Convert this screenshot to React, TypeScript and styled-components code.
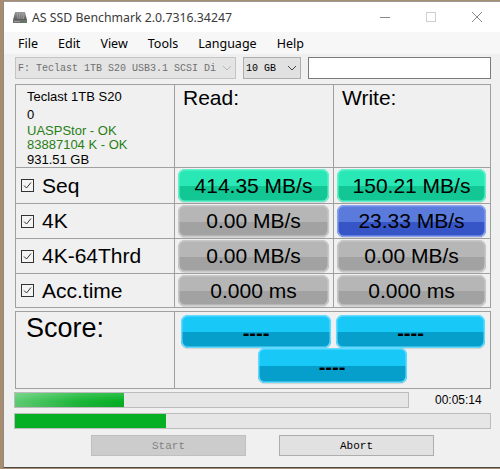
import React from "react";
import styled, { createGlobalStyle } from "styled-components";

const Global = createGlobalStyle`
  html, body { margin: 0; padding: 0; overflow: hidden; }
  body { width: 500px; height: 469px; background: #a98c6d; }
  * { box-sizing: border-box; }
`;

const Window = styled.div`
  margin: 1px 0 0 3px;
  width: 497px;
  height: 467px;
  background: #f0f0f0;
  border-left: 1px solid #8a8a8a;
  border-top: 1px solid #9a9a9a;
  border-bottom: 1px solid #4a4a4a;
  display: flex;
  flex-direction: column;
  font-family: "Liberation Sans", Arial, sans-serif;
  overflow: hidden;
`;

const TitleBar = styled.div`
  height: 30px;
  background: #ffffff;
  display: flex;
  align-items: center;
  padding-left: 8px;
`;

const TitleText = styled.span`
  font-family: "Noto Sans", "Open Sans", sans-serif;
  font-size: 12.3px;
  color: #3a3a3a;
  margin-left: 4px;
`;

const Caption = styled.div`
  margin-left: auto;
  display: flex;
  height: 100%;
`;

const CaptionBtn = styled.div`
  width: 46px;
  height: 100%;
  display: flex;
  align-items: center;
  justify-content: center;
`;

const MenuBar = styled.div`
  height: 22px;
  background: #f7f7f7;
  display: flex;
  align-items: center;
  gap: 20px;
  padding-left: 14px;
  font-family: "Noto Sans", "Open Sans", sans-serif;
  font-size: 12.5px;
  color: #000;
`;

const MenuItem = styled.span``;

const Toolbar = styled.div`
  margin-top: 3px;
  height: 22px;
  padding-left: 11px;
  display: flex;
  gap: 7px;
`;

const Combo = styled.div<{ $w: number; $disabled?: boolean }>`
  width: ${(p) => p.$w}px;
  height: 22px;
  border: 1px solid ${(p) => (p.$disabled ? "#c4c4c4" : "#adadad")};
  background: ${(p) => (p.$disabled ? "#e4e4e4" : "#e1e1e1")};
  color: ${(p) => (p.$disabled ? "#707070" : "#000")};
  display: flex;
  align-items: center;
  padding-left: 2px;
  font-family: "Liberation Mono", "Courier New", monospace;
  font-size: 10px;
  white-space: nowrap;
  overflow: hidden;
`;

const ComboText = styled.span`
  flex: 1;
  overflow: hidden;
`;

const Chevron = styled.span`
  width: 17px;
  display: flex;
  justify-content: center;
  align-items: center;
`;

const TextInput = styled.div`
  width: 183px;
  height: 22px;
  background: #fff;
  border: 1px solid #7a7a7a;
`;

const Grid = styled.div`
  margin: 5px 0 0 11px;
  width: 476px;
  background: #a0a0a0;
  padding: 1px;
  display: grid;
  grid-template-columns: 158px 158px 156px;
  grid-template-rows: 82px 35px 34px 34px 33px;
  gap: 1px;
`;

const InfoCell = styled.div`
  background: #f0f0f0;
  padding: 4px 0 0 11px;
  font-size: 13px;
`;

const InfoLine = styled.div<{ $mt?: number; $green?: boolean }>`
  line-height: 15px;
  margin-top: ${(p) => p.$mt ?? 0}px;
  color: ${(p) => (p.$green ? "#2a7e16" : "#000")};
  white-space: nowrap;
`;

const HeadCell = styled.div`
  background: #f0f0f0;
  padding: 1px 0 0 8px;
  font-size: 21px;
  line-height: 24px;
  color: #000;
`;

const LabelCell = styled.div`
  background: #f0f0f0;
  display: flex;
  align-items: center;
  padding-left: 5px;
  gap: 8px;
  font-size: 21px;
  color: #000;
`;

const ValueCell = styled.div`
  background: #f0f0f0;
  padding: 1px 4px 1px 3px;
  display: flex;
`;

type Tone = "green" | "gray" | "blue" | "cyan";
const tones: Record<Tone, { top: string; bottom: string; edge: string }> = {
  green: { top: "#2ae7b6", bottom: "#13c794", edge: "#63f2cc" },
  gray: { top: "#b6b6b6", bottom: "#a2a2a2", edge: "#c8c8c8" },
  blue: { top: "#5a7bdc", bottom: "#3656c8", edge: "#89a2ee" },
  cyan: { top: "#18c9f7", bottom: "#069fcb", edge: "#62d9ff" },
};

const Pill = styled.div<{ $tone: Tone }>`
  flex: 1;
  border-radius: 7px;
  background: linear-gradient(
    to bottom,
    ${(p) => tones[p.$tone].top} 0%,
    ${(p) => tones[p.$tone].top} 52%,
    ${(p) => tones[p.$tone].bottom} 52%,
    ${(p) => tones[p.$tone].bottom} 100%
  );
  box-shadow: inset 0 0 0 1.5px ${(p) => tones[p.$tone].edge},
    0 1px 1px rgba(0, 0, 0, 0.12);
  display: flex;
  align-items: center;
  justify-content: center;
  font-size: 21px;
  color: #000;
  white-space: nowrap;
`;

const ScoreBox = styled.div`
  margin: 3px 0 0 11px;
  width: 476px;
  height: 78px;
  background: #a0a0a0;
  padding: 1px;
  display: grid;
  grid-template-columns: 158px 1fr;
  gap: 1px;
`;

const ScoreLabel = styled.div`
  background: #f0f0f0;
  padding: 1px 0 0 10px;
  font-size: 27px;
  line-height: 30px;
`;

const ScorePills = styled.div`
  background: #f0f0f0;
  padding: 3px 0 0 6px;
  display: grid;
  grid-template-columns: 150px 149px;
  grid-template-rows: 33px 35px;
  column-gap: 5px;
`;

const ScorePill = styled(Pill)<{ $wide?: boolean }>`
  font-size: 20px;
  font-weight: bold;
  padding-top: 4px;
  ${(p) =>
    p.$wide
      ? "grid-column: 1 / span 2; justify-self: center; width: 149px; margin-left: -2px;"
      : ""}
`;

const ProgressRow = styled.div<{ $mt: number }>`
  margin: ${(p) => p.$mt}px 0 0 10px;
  display: flex;
  align-items: center;
`;

const Progress = styled.div<{ $w: number }>`
  width: ${(p) => p.$w}px;
  height: 16px;
  border: 1px solid #bcbcbc;
  background: #e6e6e6;
  display: flex;
`;

const Fill = styled.div<{ $glossy?: boolean }>`
  height: 100%;
  background: ${(p) =>
    p.$glossy
      ? "linear-gradient(to right, rgba(255,255,255,0.35), rgba(255,255,255,0.08) 60%, rgba(255,255,255,0) 95%), linear-gradient(to bottom, #30c04c, #06b025 60%, #0aa82a)"
      : "#06b025"};
`;

const Timer = styled.span`
  margin-left: 26px;
  font-size: 12px;
  color: #000;
`;

const ButtonRow = styled.div`
  margin: 6px 0 0 87px;
  display: flex;
  gap: 33px;
`;

const Button = styled.div<{ $disabled?: boolean }>`
  width: 155px;
  height: 21px;
  border: 1px solid ${(p) => (p.$disabled ? "#bfbfbf" : "#adadad")};
  background: ${(p) => (p.$disabled ? "#cccccc" : "#e1e1e1")};
  color: ${(p) => (p.$disabled ? "#838383" : "#000")};
  display: flex;
  align-items: center;
  justify-content: center;
  font-family: "Liberation Mono", "Courier New", monospace;
  font-size: 11px;
`;

const Check = () => (
  <svg width="13" height="13" viewBox="0 0 13 13">
    <rect x="0.5" y="0.5" width="12" height="12" fill="#f4f4f4" stroke="#333" />
    <polyline points="3,6.5 5.5,9 10,3.5" fill="none" stroke="#333" strokeWidth="1" />
  </svg>
);

const DriveIcon = () => (
  <svg width="16" height="16" viewBox="0 0 16 16">
    <defs>
      <linearGradient id="dg" x1="0" y1="0" x2="0" y2="1">
        <stop offset="0" stopColor="#9a9a9a" />
        <stop offset="1" stopColor="#5a5a5a" />
      </linearGradient>
    </defs>
    <path d="M3 3 L13 3 L15 11 L1 11 Z" fill="url(#dg)" />
    <path d="M5 4 L6 10 M7.5 4 L7.8 10 M10 4 L9.8 10 M12 4 L11.5 10" stroke="#b5b5b5" strokeWidth="0.6" />
    <rect x="1" y="11" width="14" height="3" fill="#6e6e6e" />
    <rect x="2" y="12" width="6" height="1" fill="#9a9a9a" />
    <rect x="12" y="12" width="2" height="1" fill="#3a3" />
  </svg>
);

const ChevronIcon = ({ color }: { color: string }) => (
  <svg width="10" height="6" viewBox="0 0 10 6">
    <polyline points="1,1 5,5 9,1" fill="none" stroke={color} strokeWidth="1" />
  </svg>
);

const rows: { label: string; read: string; write: string; rt: Tone; wt: Tone }[] = [
  { label: "Seq", read: "414.35 MB/s", write: "150.21 MB/s", rt: "green", wt: "green" },
  { label: "4K", read: "0.00 MB/s", write: "23.33 MB/s", rt: "gray", wt: "blue" },
  { label: "4K-64Thrd", read: "0.00 MB/s", write: "0.00 MB/s", rt: "gray", wt: "gray" },
  { label: "Acc.time", read: "0.000 ms", write: "0.000 ms", rt: "gray", wt: "gray" },
];

export default function App() {
  return (
    <>
      <Global />
      <Window>
        <TitleBar>
          <DriveIcon />
          <TitleText>AS SSD Benchmark 2.0.7316.34247</TitleText>
          <Caption>
            <CaptionBtn>
              <svg width="10" height="10" viewBox="0 0 10 10">
                <line x1="0" y1="5.5" x2="10" y2="5.5" stroke="#8a8a8a" />
              </svg>
            </CaptionBtn>
            <CaptionBtn>
              <svg width="10" height="10" viewBox="0 0 10 10">
                <rect x="0.5" y="0.5" width="9" height="9" fill="none" stroke="#cfcfcf" />
              </svg>
            </CaptionBtn>
            <CaptionBtn>
              <svg width="10" height="10" viewBox="0 0 10 10">
                <path d="M0 0 L10 10 M10 0 L0 10" stroke="#8a8a8a" />
              </svg>
            </CaptionBtn>
          </Caption>
        </TitleBar>
        <MenuBar>
          {["File", "Edit", "View", "Tools", "Language", "Help"].map((m) => (
            <MenuItem key={m}>{m}</MenuItem>
          ))}
        </MenuBar>
        <Toolbar>
          <Combo $w={221} $disabled>
            <ComboText>F: Teclast 1TB S20 USB3.1 SCSI Di</ComboText>
            <Chevron>
              <ChevronIcon color="#b8b8b8" />
            </Chevron>
          </Combo>
          <Combo $w={58}>
            <ComboText>10 GB</ComboText>
            <Chevron>
              <ChevronIcon color="#444" />
            </Chevron>
          </Combo>
          <TextInput />
        </Toolbar>
        <Grid>
          <InfoCell>
            <InfoLine>Teclast 1TB S20</InfoLine>
            <InfoLine $mt={3}>0</InfoLine>
            <InfoLine $mt={1} $green>UASPStor - OK</InfoLine>
            <InfoLine $mt={-1} $green>83887104 K - OK</InfoLine>
            <InfoLine>931.51 GB</InfoLine>
          </InfoCell>
          <HeadCell>Read:</HeadCell>
          <HeadCell>Write:</HeadCell>
          {rows.map((r) => (
            <React.Fragment key={r.label}>
              <LabelCell>
                <Check />
                <span>{r.label}</span>
              </LabelCell>
              <ValueCell>
                <Pill $tone={r.rt}>{r.read}</Pill>
              </ValueCell>
              <ValueCell>
                <Pill $tone={r.wt}>{r.write}</Pill>
              </ValueCell>
            </React.Fragment>
          ))}
        </Grid>
        <ScoreBox>
          <ScoreLabel>Score:</ScoreLabel>
          <ScorePills>
            <ScorePill $tone="cyan">----</ScorePill>
            <ScorePill $tone="cyan">----</ScorePill>
            <ScorePill $tone="cyan" $wide>----</ScorePill>
          </ScorePills>
        </ScoreBox>
        <ProgressRow $mt={3}>
          <Progress $w={395}>
            <Fill $glossy style={{ width: "109px" }} />
          </Progress>
          <Timer>00:05:14</Timer>
        </ProgressRow>
        <ProgressRow $mt={5}>
          <Progress $w={477}>
            <Fill style={{ width: "151px" }} />
          </Progress>
        </ProgressRow>
        <ButtonRow>
          <Button $disabled>Start</Button>
          <Button>Abort</Button>
        </ButtonRow>
      </Window>
    </>
  );
}
